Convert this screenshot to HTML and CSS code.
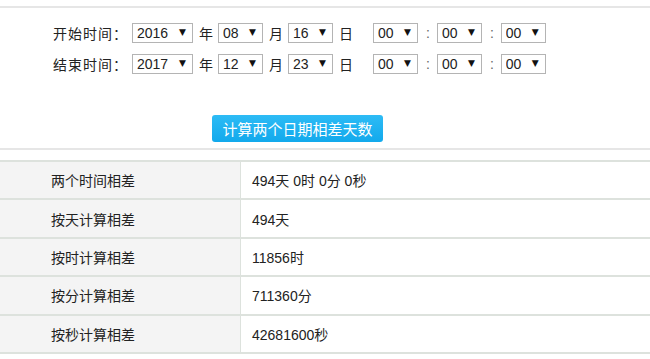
FILE: index.html
```html
<!DOCTYPE html>
<html lang="zh-CN">

<head>
    <meta charset="UTF-8">
    <meta name="viewport" content="width=device-width, initial-scale=1.0">
    <title>日期相差天数计算</title>
    <link rel="stylesheet" href="styles.css">
</head>

<body>
    <div class="calc-box">
        <form class="date-form">
            <div class="date-row">
                <span class="label">开始时间：</span>
                <span class="sel sel-year"><select><option>2016</option></select></span>
                <span class="unit">年</span>
                <span class="sel"><select><option>08</option></select></span>
                <span class="unit">月</span>
                <span class="sel"><select><option>16</option></select></span>
                <span class="unit unit-day">日</span>
                <span class="sel"><select><option>00</option></select></span>
                <span class="colon">:</span>
                <span class="sel"><select><option>00</option></select></span>
                <span class="colon">:</span>
                <span class="sel"><select><option>00</option></select></span>
            </div>
            <div class="date-row">
                <span class="label">结束时间：</span>
                <span class="sel sel-year"><select><option>2017</option></select></span>
                <span class="unit">年</span>
                <span class="sel"><select><option>12</option></select></span>
                <span class="unit">月</span>
                <span class="sel"><select><option>23</option></select></span>
                <span class="unit unit-day">日</span>
                <span class="sel"><select><option>00</option></select></span>
                <span class="colon">:</span>
                <span class="sel"><select><option>00</option></select></span>
                <span class="colon">:</span>
                <span class="sel"><select><option>00</option></select></span>
            </div>
            <div class="actions">
                <input type="button" class="calc-btn" value="计算两个日期相差天数">
            </div>
        </form>

        <table class="result-table">
            <tr>
                <th>两个时间相差</th>
                <td>494天 0时 0分 0秒</td>
            </tr>
            <tr>
                <th>按天计算相差</th>
                <td>494天</td>
            </tr>
            <tr>
                <th>按时计算相差</th>
                <td>11856时</td>
            </tr>
            <tr>
                <th>按分计算相差</th>
                <td>711360分</td>
            </tr>
            <tr>
                <th>按秒计算相差</th>
                <td>42681600秒</td>
            </tr>
        </table>
    </div>
</body>

</html>
```

FILE: styles.css
```css
/* page */
body {
    margin: 0;
    padding: 6px 0 0;
    background-color: #fff;
    color: #222;
    font-family: "Liberation Sans", "Noto Sans CJK SC", sans-serif;
    font-size: 14px;
}

.calc-box {
    border-top: 2px solid #e6e6e6;
}

/* form */
.date-form {
    padding: 9px 0 0;
    margin: 0;
    border-bottom: 2px solid #e6e6e6;
}

.date-row {
    display: flex;
    align-items: center;
    height: 31px;
    padding-left: 53px;
}

.label {
    width: 79px;
    letter-spacing: 1px;
}

.unit {
    margin: 0 5px 0 6px;
}

.unit-day {
    margin-right: 20px;
}

.colon {
    margin: 0 7px 0 8px;
    color: #666;
}

.sel {
    position: relative;
    display: inline-block;
}

.sel select {
    appearance: none;
    -webkit-appearance: none;
    width: 45px;
    height: 20px;
    padding: 0 0 0 4px;
    border: 1px solid #b4b4b4;
    border-radius: 0;
    background-color: #fff;
    color: #222;
    font-family: "Liberation Sans", sans-serif;
    font-size: 14px;
    box-sizing: border-box;
}

.sel-year select {
    width: 61px;
}

.sel::after {
    content: "▼";
    position: absolute;
    right: 7px;
    top: 4px;
    font-family: "DejaVu Sans", sans-serif;
    font-size: 9px;
    color: #111;
    pointer-events: none;
}

.actions {
    padding: 36px 0 6px 212px;
}

/* button */
.calc-btn {
    display: block;
    width: 171px;
    height: 27px;
    padding: 0;
    border: none;
    border-radius: 3px;
    background: linear-gradient(#2dbbf5, #12a9ec);
    color: #fff;
    font-family: "Noto Sans CJK SC", sans-serif;
    font-size: 15px;
    cursor: pointer;
}

/* result table */
.result-table {
    width: 100%;
    margin-top: 10px;
    border-collapse: collapse;
}

.result-table th,
.result-table td {
    height: 36.4px;
    padding: 0;
    border-top: 2px solid #dde2dd;
    border-bottom: 2px solid #dde2dd;
    font-weight: normal;
    text-align: left;
}

.result-table th {
    width: 189px;
    padding-left: 51px;
    background-color: #f4f4f4;
    border-right: 1px solid #dde2dd;
}

.result-table td {
    padding-left: 11px;
}
```
